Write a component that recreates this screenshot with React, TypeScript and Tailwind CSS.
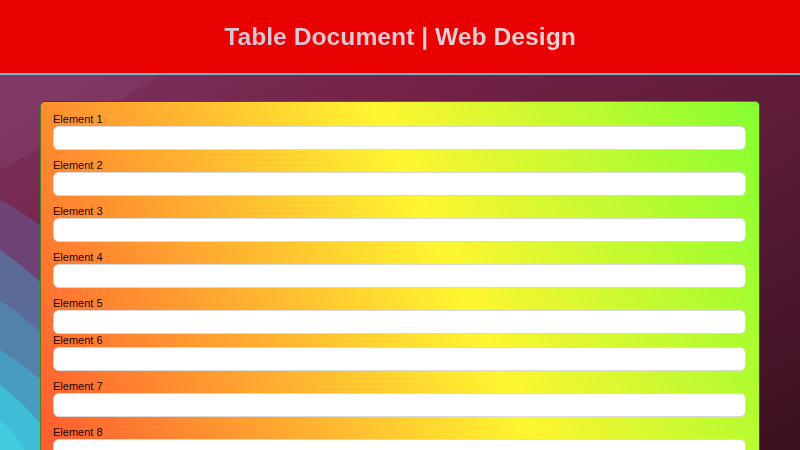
const fields = Array.from({ length: 10 }, (_, i) => i + 1)

function Backdrop() {
  return (
    <svg className="absolute left-0 top-0 h-[450px] w-full" viewBox="0 0 800 450" preserveAspectRatio="none">
      <defs>
        <linearGradient id="page" x1="0" y1="0" x2="1" y2="1">
          <stop offset="0" stopColor="#7e3a6a" />
          <stop offset="0.35" stopColor="#742246" />
          <stop offset="0.7" stopColor="#561a33" />
          <stop offset="1" stopColor="#3a1020" />
        </linearGradient>
      </defs>
      <rect width="800" height="450" fill="url(#page)" />
      <path d="M0 75 L160 75 L90 120 L0 170 Z" fill="#8a4474" opacity="0.35" />
      <path d="M0 200 C30 215 60 240 90 270 L90 450 L0 450 Z" fill="#6c4a80" opacity="0.8" />
      <path d="M0 250 C30 270 60 300 90 330 L90 450 L0 450 Z" fill="#5c6a98" />
      <path d="M0 300 C30 320 60 350 90 380 L90 450 L0 450 Z" fill="#5282aa" />
      <path d="M0 350 C25 365 50 385 80 420 L80 450 L0 450 Z" fill="#489cc0" />
      <path d="M0 385 C20 400 40 420 60 450 L0 450 Z" fill="#3fbcd6" />
      <path d="M0 420 C10 428 18 438 25 450 L0 450 Z" fill="#44cade" />
    </svg>
  )
}

export default function App() {
  return (
    <div className="relative min-h-screen overflow-hidden font-['Liberation_Sans',Arial,sans-serif]">
      <Backdrop />
      <div className="relative">
        <header className="flex h-[75px] items-center justify-center border-b-2 border-[#78b8cc] bg-[#e90000] pt-[2px]">
          <h1 className="bg-[linear-gradient(90deg,#d6c4d4,#f2d2d2)] bg-clip-text text-[24.7px] font-bold leading-none text-transparent">
            Table Document | Web Design
          </h1>
        </header>

        <main className="px-[40px] pt-[26px] pb-6">
          <form className="rounded-[5px] border border-black/50 bg-[linear-gradient(65deg,#ff4a30_0%,#ff9230_25%,#fff530_58.5%,#85ff30_100%)] pt-[11px] pr-[13px] pb-[3px] pl-[12px]">
            {fields.map((n) => (
              <div key={n} className={n === 5 ? 'mb-0' : 'mb-[9px]'}>
                <label htmlFor={`el${n}`} className="block text-[11px] leading-[13px] text-[#1c0606]">
                  Element {n}
                </label>
                <input
                  id={`el${n}`}
                  type="text"
                  className="block h-[24px] w-full rounded-[6px] border border-[#dadada] bg-white px-2 text-sm outline-none"
                />
              </div>
            ))}
          </form>
        </main>
      </div>
    </div>
  )
}
